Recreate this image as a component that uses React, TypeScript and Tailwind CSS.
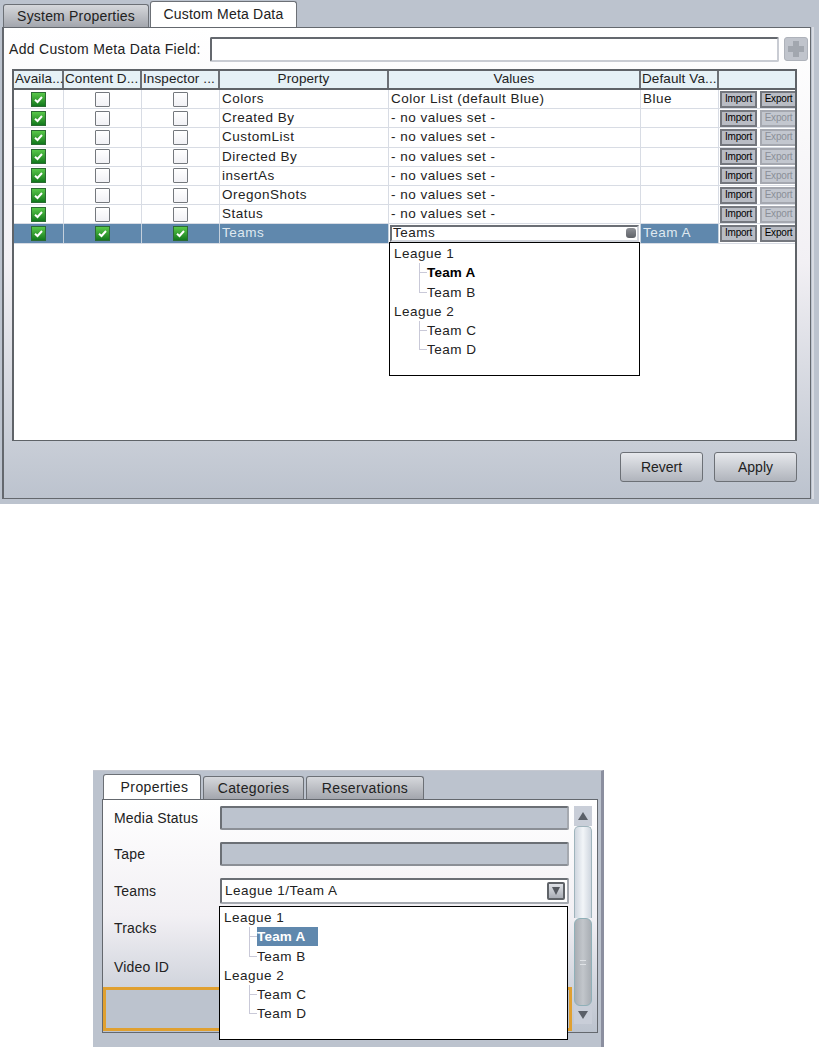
import React from "react";

const FONT = "font-['Liberation_Sans',Arial,sans-serif]";

function Check({ on }: { on: boolean }) {
  if (!on)
    return <div className="w-[15px] h-[15px] border border-[#74787d] bg-gradient-to-b from-white to-[#f1f1f5] rounded-[1px]" />;
  return (
    <div className="w-[15px] h-[15px] flex items-center justify-center border border-[#2b6b33] bg-gradient-to-b from-[#58c84a] to-[#0f7a1c]">
      <svg width="11" height="11" viewBox="0 0 11 11">
        <path d="M2 5.8 L4.5 8 L9 3" stroke="#fff" strokeWidth="2" fill="none" />
      </svg>
    </div>
  );
}

const headers = ["Availa...", "Content D...", "Inspector ...", "Property", "Values", "Default Va...", ""];
const rows = [
  ["Colors", "Color List (default Blue)", "Blue", true],
  ["Created By", "- no values set -", "", false],
  ["CustomList", "- no values set -", "", false],
  ["Directed By", "- no values set -", "", false],
  ["insertAs", "- no values set -", "", false],
  ["OregonShots", "- no values set -", "", false],
  ["Status", "- no values set -", "", false],
] as const;

const COLS = "grid grid-cols-[50px_78px_78px_169px_252px_78px_76px]";

function SmallButtons({ exportOn }: { exportOn: boolean }) {
  return (
    <div className="flex h-full items-center justify-between pl-[1px] overflow-hidden">
      <div className="w-[37px] h-[17px] flex items-center justify-center border-2 border-[#74777e] bg-[#b9bcc4] text-[10px] tracking-[-0.2px] text-black">
        Import
      </div>
      <div className={`w-[35px] h-[17px] flex items-center justify-center border-2 border-r-0 text-[10px] tracking-[-0.2px] ${exportOn ? "border-[#74777e] bg-[#b9bcc4] text-black" : "border-[#a5a8b0] bg-[#c3c7cf] text-[#8b8f98]"}`}>
        Export
      </div>
    </div>
  );
}

function Row({ name, value, def, exportOn }: { name: string; value: string; def: string; exportOn: boolean }) {
  return (
    <div className={`${COLS} h-[19.2px] border-b border-[#d8dce4] text-[13.5px] leading-[18px] tracking-[0.5px] text-[#222]`}>
      <div className="flex items-center justify-center border-r border-[#d8dce4]"><Check on /></div>
      <div className="flex items-center justify-center border-r border-[#d8dce4]"><Check on={false} /></div>
      <div className="flex items-center justify-center border-r border-[#d8dce4]"><Check on={false} /></div>
      <div className="pl-[2px] border-r border-[#d8dce4] truncate">{name}</div>
      <div className="pl-[2px] border-r border-[#d8dce4] truncate">{value}</div>
      <div className="pl-[2px] border-r border-[#d8dce4] truncate">{def}</div>
      <SmallButtons exportOn={exportOn} />
    </div>
  );
}

function SelectedRow() {
  return (
    <div className={`${COLS} h-[19.2px] bg-[#6088ad] border-b border-[#d8dce4] text-[13.5px] leading-[18px] tracking-[0.5px] text-[#dfe8f0]`}>
      <div className="flex items-center justify-center border-r border-[#c4d0dc]"><Check on /></div>
      <div className="flex items-center justify-center border-r border-[#c4d0dc]"><Check on /></div>
      <div className="flex items-center justify-center border-r border-[#c4d0dc]"><Check on /></div>
      <div className="pl-[2px] border-r border-[#c4d0dc]">Teams</div>
      <div className="bg-white flex items-center pl-[1px] pr-[1px] border-r border-[#c4d0dc]">
        <div className="flex-1 h-[17px] border-2 border-[#6b6f75] border-r-[#d0d3da] border-b-[#d0d3da] flex items-center justify-between pl-[1px] pr-[1px] text-[#222]">
          <span>Teams</span>
          <span className="w-[10px] h-[10px] rounded-[3px] bg-gradient-to-b from-[#8d9096] to-[#5f6268]" />
        </div>
      </div>
      <div className="pl-[2px] border-r border-[#c4d0dc]">Team A</div>
      <div className="bg-white"><SmallButtons exportOn /></div>
    </div>
  );
}

function TreeList({ left, boldOnly }: { left: string; boldOnly: boolean }) {
  const group = (title: string, a: string, b: string, highlight: boolean) => (
    <div>
      <div className="h-[19.3px] leading-[19px] pl-[4px]">{title}</div>
      <div className="relative pl-[37px]">
        <div className="absolute left-[29px] top-0 h-[29px] w-px bg-[#c9c9d8]" />
        <div className="h-[19.3px] leading-[19px] relative">
          <div className="absolute left-[-8px] top-[9px] w-[8px] h-px bg-[#c9c9d8]" />
          {highlight ? (
            boldOnly ? (
              <span className="font-bold text-black tracking-[0.2px]">{a}</span>
            ) : (
              <span className="inline-block font-bold bg-[#6088ad] text-white w-[61px] h-[19px] tracking-[0.2px]">{a}</span>
            )
          ) : (
            a
          )}
        </div>
        <div className="h-[19.3px] leading-[19px] relative">
          <div className="absolute left-[-8px] top-[9px] w-[8px] h-px bg-[#c9c9d8]" />
          {b}
        </div>
      </div>
    </div>
  );
  return (
    <div className={`absolute ${left} bg-white border border-black text-[13.5px] tracking-[0.5px] text-[#222] pt-[1px]`}>
      {group("League 1", "Team A", "Team B", true)}
      {group("League 2", "Team C", "Team D", false)}
    </div>
  );
}

function BigButton({ label }: { label: string }) {
  return (
    <div className="w-[83px] h-[30px] flex items-center justify-center rounded-[3px] border border-[#6c7076] bg-gradient-to-b from-[#e6e8ec] to-[#b0b4bc] text-[14px] text-[#222]">
      {label}
    </div>
  );
}

function TopPanel() {
  return (
    <div className="w-[819px] h-[504px] bg-[#bcc3ce] pl-[2px] flex flex-col relative">
      <div className="h-[27px] flex items-end pl-[1px] gap-[1px] text-[14px] tracking-[0.2px] shrink-0">
        <div className="w-[146px] h-[23px] flex items-center justify-center rounded-t-[3px] border border-b-0 border-[#6c7076] bg-gradient-to-b from-[#d6d8dc] to-[#a3a6ad] text-[#222]">
          System Properties
        </div>
        <div className="w-[147px] h-[26px] flex items-center justify-center rounded-t-[3px] border border-b-0 border-[#6c7076] bg-white text-[#222] relative z-10">
          Custom Meta Data
        </div>
      </div>
      <div className="w-[809px] h-[472px] border border-[#64686e] border-l-2 bg-gradient-to-b from-white via-[#f2f0f4] to-[#bcc3ce] flex flex-col pl-[8px]">
        <div className="h-[41px] flex items-center pt-[1px] text-[14px] tracking-[0.3px] text-[#222] shrink-0">
          <span className="w-[201px] -ml-[3px] shrink-0">Add Custom Meta Data Field:</span>
          <div className="w-[569px] h-[25px] shrink-0 bg-white border-2 border-[#64686e] border-r-[#c9ccd3] border-b-[#c9ccd3] rounded-[2px]" />
          <div className="ml-[5px] w-[24px] h-[24px] shrink-0 rounded-[3px] border border-[#aeb2ba] bg-[#c0c4cc] flex items-center justify-center">
            <svg width="18" height="18" viewBox="0 0 18 18"><path d="M6 1h6v5h5v6h-5v5H6v-5H1V6h5z" fill="#a2a7af" /></svg>
          </div>
        </div>
        <div className="w-[785px] h-[372px] border-t-2 border-l-2 border-r-2 border-b border-[#5f6368] bg-white relative shrink-0">
          <div className={`${COLS} h-[19px] bg-[#e6f1f6] border-b-2 border-[#5f6368] text-[13.5px] leading-[16px] tracking-[0.1px] text-[#222]`}>
            {headers.map((h, i) => (
              <div key={i} className={`whitespace-nowrap ${i < 6 ? "border-r-2 border-[#6c7076]" : ""} ${i === 3 || i === 4 ? "text-center" : "pl-[1px]"}`}>
                {h}
              </div>
            ))}
          </div>
          {rows.map((r) => (
            <Row key={r[0]} name={r[0]} value={r[1]} def={r[2]} exportOn={r[3]} />
          ))}
          <SelectedRow />
        </div>
        <div className="flex justify-end gap-[11px] mt-[11px] w-[785px]">
          <BigButton label="Revert" />
          <BigButton label="Apply" />
        </div>
      </div>
      <TreeList left="left-[389px] top-[242px] w-[251px] h-[134px]" boldOnly />
      <div className="absolute right-[5px] top-[27px] w-[2px] h-[472px] bg-[#d8dbe2]" />
    </div>
  );
}

function Field({ label, gray, h, children }: { label: string; gray?: boolean; h: string; children?: React.ReactNode }) {
  return (
    <div className={`flex items-center ${h} shrink-0`}>
      <span className="w-[117px] pl-[11px] text-[14px] tracking-[0.2px] text-[#222] shrink-0">{label}</span>
      {gray && <div className="w-[349px] h-[24px] bg-[#bcc3ce] border-2 border-[#6b6f75] border-r-[#a5a9b0] border-b-[#8b8f96] rounded-[2px]" />}
      {children}
    </div>
  );
}

function ScrollBtn({ up }: { up: boolean }) {
  return (
    <div className={`w-[18px] ${up ? "h-[20px]" : "h-[18px]"} bg-[#c9ced8] flex items-center justify-center shrink-0`}>
      <svg width="12" height="12" viewBox="0 0 12 12">
        <path d={up ? "M6 2 L11 10 H1 Z" : "M6 10 L11 2 H1 Z"} fill="#5b6068" />
      </svg>
    </div>
  );
}

function BottomPanel() {
  return (
    <div className="ml-[93px] w-[511px] h-[277px] bg-[#bcc3ce] border-r-[3px] border-[#8b8f9f] border-t border-t-[#c5c8d0] relative pl-[9px] flex flex-col">
      <div className="h-[28px] flex items-end pl-[1px] gap-[2px] text-[14px] tracking-[0.4px] text-[#222] shrink-0">
        <div className="w-[98px] h-[25px] flex items-center justify-center pl-[5px] rounded-t-[3px] border border-b-0 border-[#6c7076] bg-white relative z-10">
          Properties
        </div>
        <div className="w-[101px] h-[23px] flex items-center justify-center rounded-t-[3px] border border-b-0 border-[#6c7076] bg-gradient-to-b from-[#d6d8dc] to-[#a3a6ad]">
          Categories
        </div>
        <div className="w-[118px] h-[23px] flex items-center justify-center rounded-t-[3px] border border-b-0 border-[#6c7076] bg-gradient-to-b from-[#d6d8dc] to-[#a3a6ad]">
          Reservations
        </div>
      </div>
      <div className="w-[496px] h-[234px] border border-[#64686e] bg-gradient-to-b from-white via-[#f2f0f4] to-[#bcc3ce] flex relative">
        <div className="w-[470px] flex flex-col">
          <Field label="Media Status" gray h="h-[36px]" />
          <Field label="Tape" gray h="h-[36px]" />
          <Field label="Teams" h="h-[38px]">
            <div className="w-[349px] h-[26px] bg-white border-2 border-[#6b6f75] border-r-[#a5a9b0] border-b-[#a5a9b0] rounded-[2px] flex items-center justify-between pl-[3px] pr-[2px] text-[13.5px] tracking-[0.5px] text-[#222]">
              <span>League 1/Team A</span>
              <span className="w-[18px] h-[18px] border-2 border-[#5f6368] bg-gradient-to-b from-[#dfe2e7] to-[#a9adb5] rounded-[2px] flex items-center justify-center">
                <svg width="10" height="10" viewBox="0 0 10 10"><path d="M5 9 L9 1 H1 Z" fill="#54585f" /></svg>
              </span>
            </div>
          </Field>
          <Field label="Tracks" h="h-[37px]" />
          <Field label="Video ID" h="h-[40px]" />
          <div className="w-[469px] h-[44px] border-[3px] border-[#e0a030] bg-[#bcc3ce] shrink-0" />
        </div>
        <div className="w-[18px] ml-[1px] mt-[6px] flex flex-col h-[218px]">
          <ScrollBtn up />
          <div className="h-[92px] rounded-t-[5px] border-x border-t border-[#9fb4bc] bg-gradient-to-r from-[#cfd6df] via-[#f2f5f8] to-[#cfd6df] shrink-0" />
          <div className="h-[88px] rounded-[6px] border border-[#8fb0b8] bg-gradient-to-r from-[#a9aeb4] via-[#c2c6cb] to-[#a9aeb4] flex items-center justify-center shrink-0">
            <div className="w-[6px] h-[5px] border-y border-[#dfe2e6]" />
          </div>
          <ScrollBtn up={false} />
        </div>
      </div>
      <TreeList left="left-[126px] top-[135px] w-[349px] h-[134px]" boldOnly={false} />
    </div>
  );
}

export default function App() {
  return (
    <div className={`w-[819px] h-[1047px] bg-white overflow-hidden ${FONT}`}>
      <TopPanel />
      <div className="h-[266px]" />
      <BottomPanel />
    </div>
  );
}
